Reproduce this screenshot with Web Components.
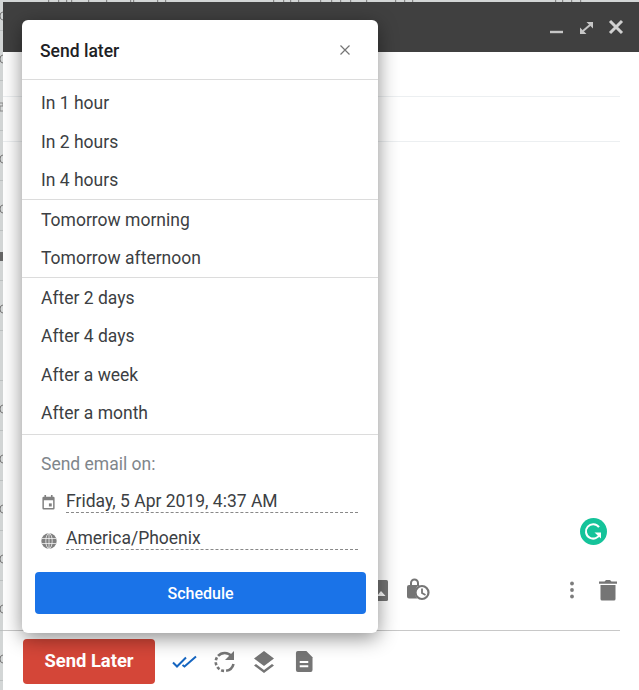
<!DOCTYPE html>
<html><head><meta charset="utf-8">
<style>
html,body{margin:0;height:100%;overflow:hidden}
body{background:#fff;font-family:Roboto,"Liberation Sans",sans-serif}
</style></head><body>
<mail-page>
  <compose-window>
    <send-later-dialog></send-later-dialog>
  </compose-window>
</mail-page>
<script>
function def(name,css,html,init){
  customElements.define(name,class extends HTMLElement{
    constructor(){super();const s=this.attachShadow({mode:'open'});s.innerHTML='<style>'+css+'</style>'+html;if(init)init(this,s);}
  });
}
def('mail-page',`
:host{display:block;height:690px;position:relative;overflow:hidden;background:#d3d6d6;padding:2px 0 0 3px;box-sizing:border-box}
.bg{position:absolute;inset:0;background:repeating-linear-gradient(#0000 0 30px,#bcc0c0 30px 31px,#0000 31px 50px)}
.bg svg{position:absolute;left:0;top:0}
`,`<div class="bg"><svg width="639" height="690" viewBox="0 0 639 690" id="m"></svg></div><slot></slot>`,(h,s)=>{
  const m=s.getElementById('m');let p='';
  [12,55,155,205,305,405,455,505,555,605,655].forEach(y=>{p+='<path d="M3 '+y+'a3 4 0 0 0-3 4 3 4 0 0 0 3 4" fill="none" stroke="#777" stroke-width="1"/>'});
  p+='<path d="M0 103h3v3H0v5h3" fill="none" stroke="#888"/><path d="M0 252h3v9H0z" fill="#666"/>';
  [48,58,66,71,88,106,130,133,157,165,273,283,290,298,320,331,340,350,366,395,404,412,555,562,571,580].forEach(x=>{p+='<rect x="'+(x)+'" y="0" width="1.200" height="2" fill="#888"/>'});
  m.innerHTML=p;
});
def('compose-window',`
:host{display:flex;flex-direction:column;position:relative;height:688px;background:#fff}
header{height:50px;background:#404040;flex:none;display:flex;justify-content:flex-end;align-items:center;gap:12px;padding:0 14px 0 0;box-sizing:border-box}
header svg{width:18px;height:18px}
.field{height:45px;margin-right:19px;border-bottom:1px solid #eceff1;box-sizing:border-box}
.body{flex:1;position:relative}
.g{position:absolute;right:32px;top:376px;width:27px;height:27px}
.tools{height:40px;display:flex;align-items:center;margin:0 19px 20px 0;padding-left:374px;box-sizing:border-box}
.rule{height:1px;background:#c8c8c8;margin-right:19px;flex:none}
.foot{height:59px;flex:none;display:flex;align-items:flex-start;padding:8px 0 0 20px;box-sizing:border-box}
.send{width:132px;height:45px;border-radius:4px;background:#d44638;color:#fff;font:700 18.4px/44px Roboto,sans-serif;text-align:center}
.ficons{display:flex;align-items:center;height:45px;margin-left:17px}
svg{display:block;flex:none}
.sp{flex:1}
::slotted(send-later-dialog){position:absolute;left:19px;top:18px}
`,`<header>
<svg viewBox="0 0 18 18"><path d="M3 12.800h13v2.400H3z" fill="#c6c6c6"/></svg>
<svg viewBox="0 0 18 18"><path fill="#c6c6c6" d="M9.500 4H16v6.500zM3 9.500V16h6.500z"/><path d="M13 7l-7 6" stroke="#c6c6c6" stroke-width="2"/></svg>
<svg viewBox="0 0 18 18"><path d="M3 3l12 12M15 3L3 15" stroke="#d0d0d0" stroke-width="3" fill="none"/></svg>
</header>
<div class="field"></div><div class="field"></div>
<div class="body">
<svg class="g" viewBox="0 0 27 27"><circle cx="13.500" cy="13.500" r="13.500" fill="#15c39a"/><path d="M19 9.200A7.200 7.200 0 1 0 20 15.600" fill="none" stroke="#fff" stroke-width="2"/><path d="M14.500 14.500h6.500v6z" fill="#fff"/></svg>
</div>
<div class="tools">
<svg width="11" height="21" viewBox="0 0 11 21"><path fill="#757575" d="M0 0h9.500a1.500 1.500 0 0 1 1.500 1.500v18a1.500 1.500 0 0 1-1.500 1.500H0z"/><path fill="#fff" d="M0 16l4-5 4.500 5z"/></svg>
<svg width="24" height="24" viewBox="0 0 24 24" style="margin-left:18px"><path d="M3 7h11c-3 1-5 4-5 7.500 0 2.500 1 4.500 2.500 6H3a2 2 0 0 1-2-2V9a2 2 0 0 1 2-2z" fill="#757575"/><path d="M5 8V5a3.500 3.500 0 0 1 7 0v3" stroke="#757575" stroke-width="2" fill="none"/><circle cx="16" cy="14.500" r="6.500" fill="#fff" stroke="#757575" stroke-width="2.200"/><path d="M16 10.500v4.500l3.500 2" stroke="#757575" stroke-width="1.800" fill="none"/></svg>
<span class="sp"></span>
<svg width="6" height="18" viewBox="0 0 6 18" style="margin-right:23px"><circle cx="3" cy="2.500" r="1.900" fill="#7c7c7c"/><circle cx="3" cy="9" r="1.900" fill="#7c7c7c"/><circle cx="3" cy="15.500" r="1.900" fill="#7c7c7c"/></svg>
<svg width="20" height="22" viewBox="0 0 20 22" style="margin-right:2px"><path fill="#757575" d="M1 2.500h5.500L8 1h4l1.500 1.500H19v2.200H1zM2.500 6h15v14a1.500 1.500 0 0 1-1.500 1.500H4A1.500 1.500 0 0 1 2.500 20z"/></svg>
</div>
<div class="rule"></div>
<div class="foot"><div class="send">Send Later</div>
<div class="ficons">
<svg width="25" height="14" viewBox="0 0 25 14"><path d="M1 7.500l4 4L14 2.500M10.500 10l2 1.500L24 1.500" stroke="#1565c0" stroke-width="2" fill="none"/></svg>
<svg width="24" height="24" viewBox="0 0 24 24" style="margin-left:16px"><path d="M18.500 6A9 9 0 1 0 20.500 14" fill="none" stroke="#757575" stroke-width="2.600" stroke-dasharray="15 2 3 2 3 2 3 2 3 2 40"/><path d="M21 1v9h-9z" fill="#757575"/></svg>
<svg width="22" height="24" viewBox="0 0 22 24" style="margin-left:16px"><path fill="#757575" d="M11 1l10 7.500-10 7.500L1 8.500zM3 14l8 6 8-6 2 1.600-10 7.400L1 15.600z"/></svg>
<svg width="18" height="22" viewBox="0 0 19 23" style="margin-left:20px"><path fill="#757575" d="M3 0h9l6.500 6.500V20a2 2 0 0 1-2 2H3a2 2 0 0 1-2-2V2a2 2 0 0 1 2-2z"/><path fill="#fff" d="M5 10.500h9v2H5zM5 15h9v2H5z"/></svg>
</div></div>
<slot></slot>`);
def('menu-item',`:host{display:block;height:38.5px;line-height:40px;padding-left:19px;font-size:17.5px;color:#3c4043;white-space:nowrap}`,`<slot></slot>`);
def('menu-group',`:host{display:block;border-bottom:1px solid #dcdcdc}`,`<slot></slot>`);
def('date-field',`:host{display:flex;align-items:flex-end;height:37px;padding-left:19px;box-sizing:border-box}
.i{width:25px;flex:none;display:flex}
.v{flex:none;width:292px;font-size:17.5px;line-height:27px;color:#3c4043;border-bottom:1px dashed #888;box-sizing:border-box;height:25px;white-space:nowrap}
`,`<span class="i"><slot name="icon"></slot></span><span class="v"><slot></slot></span>`);
def('send-later-dialog',`
:host{display:block;width:356px;height:613px;background:#fff;border-radius:6px;box-shadow:0 5px 20px rgba(0,0,0,.45);overflow:hidden;color:#3c4043}
.head{height:60px;box-sizing:border-box;border-bottom:1px solid #dcdcdc;display:flex;align-items:center;justify-content:space-between;padding:2px 27px 0 18px;font-size:17.5px;font-weight:500;color:#202124}
.head svg{margin-top:-2px}
.label{padding:17px 0 0 19px;height:41px;box-sizing:border-box;line-height:24px;font-size:17.5px;color:#80868b}
.btn{margin:22px 12px 0 13px;height:42px;border-radius:4px;background:#1a73e8;color:#fff;font:500 16px/43px Roboto,sans-serif;text-align:center}
`,`<div class="head"><span>Send later</span><svg width="12" height="12" viewBox="0 0 12 12"><path d="M1.500 1.500l9 9M10.500 1.500l-9 9" stroke="#757575" stroke-width="1.200" fill="none"/></svg></div>
<menu-group style="padding-top:3px"><menu-item>In 1 hour</menu-item><menu-item>In 2 hours</menu-item><menu-item>In 4 hours</menu-item></menu-group>
<menu-group><menu-item>Tomorrow morning</menu-item><menu-item>Tomorrow afternoon</menu-item></menu-group>
<menu-group style="padding-bottom:2px"><menu-item>After 2 days</menu-item><menu-item>After 4 days</menu-item><menu-item>After a week</menu-item><menu-item>After a month</menu-item></menu-group>
<div class="label">Send email on:</div>
<date-field><svg slot="icon" style="margin:0 0 3px 1px" width="13" height="15" viewBox="0 0 16 17" preserveAspectRatio="none"><path fill="#808080" d="M3 0h2v2h6V0h2v2h1a1.500 1.500 0 0 1 1.500 1.500v11.500A1.500 1.500 0 0 1 14 16.500H2A1.500 1.500 0 0 1 .5 15V3.500A1.500 1.500 0 0 1 2 2h1zM2.300 6v8.700h11.400V6z"/><path fill="#808080" d="M8.500 9.500h3.500v3.500H8.500z"/></svg>Friday, 5 Apr 2019, 4:37 AM</date-field>
<date-field><svg slot="icon" style="margin-bottom:1px" width="16" height="16" viewBox="0 0 16 16"><circle cx="8" cy="8" r="7.700" fill="#808080"/><g stroke="#fff" stroke-width=".7" fill="none"><ellipse cx="8" cy="8" rx="3.200" ry="7.500"/><path d="M1 5.500h14M1 10.500h14M8 .5v15"/></g></svg>America/Phoenix</date-field>
<div class="btn">Schedule</div>`);
</script>
</body></html>
